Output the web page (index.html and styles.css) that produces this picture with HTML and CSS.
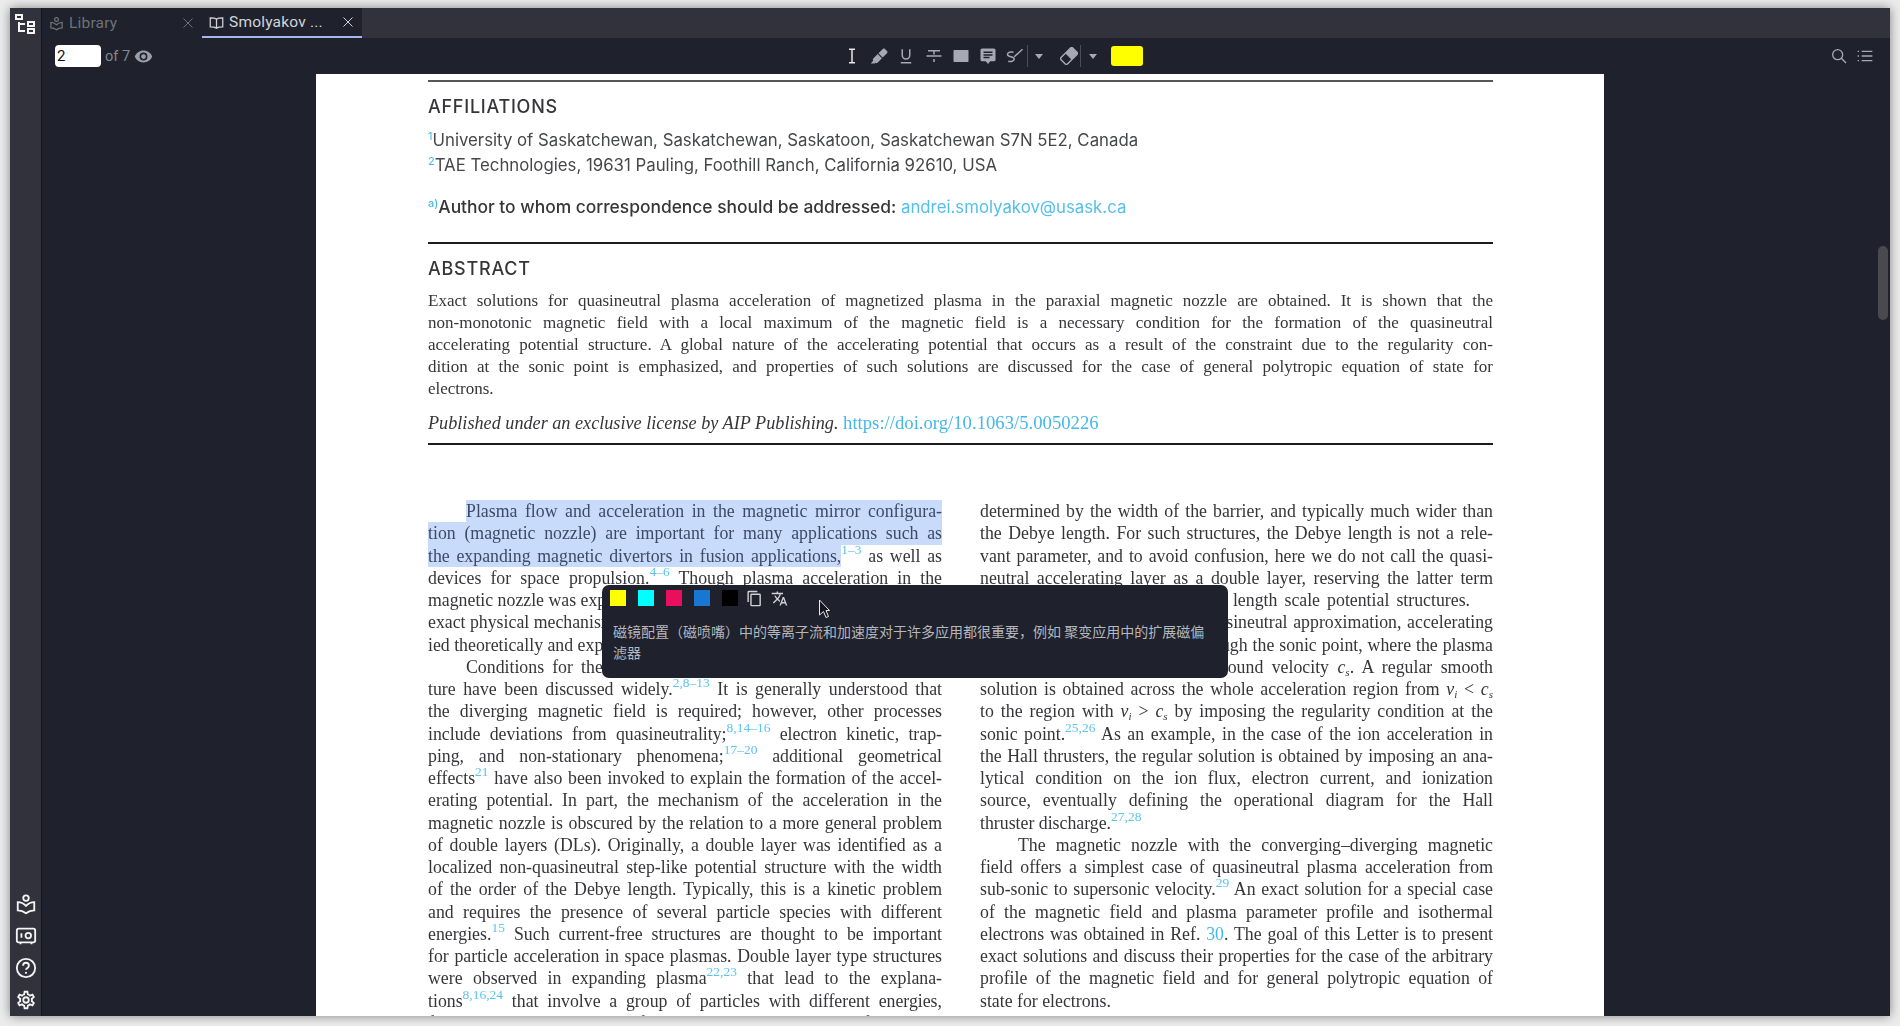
FILE: index.html
```html
<!DOCTYPE html>
<html lang="en">
  <head>
    <meta charset="UTF-8" />
    <meta name="viewport" content="width=device-width, initial-scale=1.0" />
    <title>Smolyakov - PDF reader</title>
    <link rel="stylesheet" href="styles.css">
  </head>
  <body>
    <div class="window">
      <aside class="sidebar">
        <svg class="side-icon tree" viewBox="0 0 24 24"><path class="fill" d="M12 13H7v5h5v2H5V10h2v1h5v2M8 4v2H4V4h4m2-2H2v6h8V2m10 9v2h-4v-2h4m2-2h-8v6h8V9m-2 9v2h-4v-2h4m2-2h-8v6h8v-6Z"/></svg>
        <div class="side-bottom">
          <svg class="side-icon" viewBox="0 0 24 24"><circle class="line" cx="12" cy="5.5" r="3"/><path class="line" d="M3 10c3 0 6.500 1.500 9 4 2.500-2.500 6-4 9-4v9c-3 0-6.500 1-9 3-2.500-2-6-3-9-3Z"/></svg>
          <svg class="side-icon" viewBox="0 0 24 24"><rect class="line" x="2" y="4" width="20" height="15" rx="2"/><circle class="line" cx="14.500" cy="11.500" r="3"/><path class="line" d="M7 9v5M6 19v2M18 19v2"/></svg>
          <svg class="side-icon" viewBox="0 0 24 24"><circle class="line" cx="12" cy="12" r="10"/><path class="line" d="M8.800 9.500a3.200 3.200 0 0 1 6.400 0c0 2.300-3.200 2.500-3.200 4.500"/><circle class="fill" cx="12" cy="17.300" r="1.200"/></svg>
          <svg class="side-icon" viewBox="0 0 24 24"><path class="fill" d="M12,8A4,4 0 0,1 16,12A4,4 0 0,1 12,16A4,4 0 0,1 8,12A4,4 0 0,1 12,8M12,10A2,2 0 0,0 10,12A2,2 0 0,0 12,14A2,2 0 0,0 14,12A2,2 0 0,0 12,10M10,22C9.750,22 9.540,21.820 9.500,21.580L9.130,18.930C8.500,18.680 7.960,18.340 7.440,17.940L4.950,18.950C4.730,19.030 4.460,18.950 4.340,18.730L2.340,15.270C2.210,15.050 2.270,14.780 2.460,14.630L4.570,12.970L4.500,12L4.570,11L2.460,9.370C2.270,9.220 2.210,8.950 2.340,8.730L4.340,5.270C4.460,5.050 4.730,4.960 4.950,5.050L7.440,6.050C7.960,5.660 8.500,5.320 9.130,5.070L9.500,2.420C9.540,2.180 9.750,2 10,2H14C14.250,2 14.460,2.180 14.500,2.420L14.870,5.070C15.500,5.320 16.040,5.660 16.560,6.050L19.050,5.050C19.270,4.960 19.540,5.050 19.660,5.270L21.660,8.730C21.790,8.950 21.730,9.220 21.540,9.370L19.430,11L19.500,12L19.430,13L21.540,14.630C21.730,14.780 21.790,15.050 21.660,15.270L19.660,18.730C19.540,18.950 19.270,19.040 19.050,18.950L16.560,17.950C16.040,18.340 15.500,18.680 14.870,18.930L14.500,21.580C14.460,21.820 14.250,22 14,22H10M11.250,4L10.880,6.610C9.680,6.860 8.620,7.500 7.850,8.390L5.440,7.350L4.690,8.650L6.800,10.200C6.400,11.370 6.400,12.640 6.800,13.800L4.680,15.360L5.430,16.660L7.860,15.620C8.630,16.500 9.680,17.140 10.870,17.380L11.240,20H12.760L13.130,17.390C14.320,17.140 15.370,16.500 16.140,15.620L18.570,16.660L19.320,15.360L17.200,13.810C17.600,12.640 17.600,11.370 17.200,10.200L19.310,8.650L18.560,7.350L16.150,8.390C15.380,7.500 14.320,6.860 13.120,6.620L12.750,4H11.250Z"/></svg>
        </div>
      </aside>

      <main class="main">
        <div class="tabbar">
          <div class="tab">
            <svg class="tab-icon" viewBox="0 0 24 24"><circle class="line" cx="12" cy="5.500" r="3"/><path class="line" d="M3 10c3 0 6.500 1.500 9 4 2.500-2.500 6-4 9-4v9c-3 0-6.500 1-9 3-2.500-2-6-3-9-3Z"/></svg>
            <span class="tab-title">Library</span>
            <svg class="tab-close" viewBox="0 0 24 24"><path class="line" d="M3 3l18 18M21 3L3 21"/></svg>
          </div>
          <div class="tab active">
            <svg class="tab-icon" viewBox="0 0 24 24"><path class="line" d="M12 6.500C10 5 7 4.500 2 4.500V19c5 0 8 .5 10 2 2-1.500 5-2 10-2V4.500c-5 0-8 .5-10 2Zm0 0V21"/></svg>
            <span class="tab-title">Smolyakov ...</span>
            <svg class="tab-close" viewBox="0 0 24 24"><path class="line" d="M3 3l18 18M21 3L3 21"/></svg>
          </div>
        </div>

        <div class="toolbar">
          <div class="pager">
            <input class="page-input" type="text" value="2" />
            <span class="page-count">of 7</span>
            <svg class="eye" viewBox="0 0 24 24"><path class="fill" d="M12,9A3,3 0 0,0 9,12A3,3 0 0,0 12,15A3,3 0 0,0 15,12A3,3 0 0,0 12,9M12,17A5,5 0 0,1 7,12A5,5 0 0,1 12,7A5,5 0 0,1 17,12A5,5 0 0,1 12,17M12,4.500C7,4.500 2.730,7.610 1,12C2.730,16.390 7,19.500 12,19.500C17,19.500 21.270,16.390 23,12C21.270,7.610 17,4.500 12,4.500Z"/></svg>
          </div>
          <div class="tools">
            <div class="tool selected"><svg viewBox="0 0 24 24"><path class="line thick" d="M8 3h8M12 3v18M8 21h8"/></svg></div>
            <div class="tool"><svg viewBox="0 0 24 24"><path class="fill" d="M18.500 2C18 2 17.500 2.200 17.100 2.600L11.300 8.400L16.900 14L22.700 8.200C23.500 7.400 23.500 6.200 22.700 5.400L19.900 2.600C19.500 2.200 19 2 18.500 2ZM10.300 9.400L4.300 15.300C3.600 16.100 3.600 17.300 4.400 18.100L1 22H6.300L7.200 21C8 21.700 9.200 21.700 10 20.900L15.900 15Z"/></svg></div>
            <div class="tool"><svg viewBox="0 0 24 24"><path class="line" d="M7 3v8a5 5 0 0 0 10 0V3M5 21h14"/></svg></div>
            <div class="tool"><svg viewBox="0 0 24 24"><path class="line" d="M4 5h16M12 5v5M2 12h20M12 16v4"/></svg></div>
            <div class="tool"><svg viewBox="0 0 24 24"><rect class="fill" x="2" y="4" width="20" height="16" rx="1"/></svg></div>
            <div class="tool"><svg viewBox="0 0 24 24"><path class="fill" fill-rule="evenodd" d="M4 2h16a2 2 0 0 1 2 2v13a2 2 0 0 1-2 2h-5l-3 3.500L9 19H4a2 2 0 0 1-2-2V4a2 2 0 0 1 2-2ZM6 6v2h12V6ZM6 9.500v2h12v-2ZM6 13v2h8v-2Z"/></svg></div>
            <div class="tool"><svg viewBox="0 0 24 24"><path class="line" d="M11 13l11-10M10 7C6 6 2 7 2 10c0 4 9 2 9 6 0 3-5 4-8 3"/></svg></div>
            <div class="tool-split"><span class="caret"></span></div>
            <div class="tool eraser"><svg viewBox="0 0 24 24"><g transform="rotate(45 12 12)"><rect class="line" x="6" y="1" width="12" height="22" rx="2"/><path class="fill" d="M6 3a2 2 0 0 1 2-2h8a2 2 0 0 1 2 2v10H6Z"/></g></svg></div>
            <div class="tool-split second"><span class="caret"></span></div>
            <div class="color-btn"></div>
          </div>
          <div class="toolbar-right">
            <svg class="right-icon" viewBox="0 0 24 24"><circle class="line" cx="10" cy="10" r="7.500"/><path class="line" d="M15.500 15.500l7 7"/></svg>
            <svg class="right-icon list" viewBox="0 0 24 24"><path class="line" d="M7 5h16M7 12h16M7 19h16M1 5h2M1 12h2M1 19h2"/></svg>
          </div>
        </div>

        <div class="viewer">
          <article class="page">
            <div class="rule thin"></div>
            <h2 class="head first">AFFILIATIONS</h2>
            <div class="aff first"><sup class="mark">1</sup>University of Saskatchewan, Saskatchewan, Saskatoon, Saskatchewan S7N 5E2, Canada</div>
            <div class="aff"><sup class="mark">2</sup>TAE Technologies, 19631 Pauling, Foothill Ranch, California 92610, USA</div>
            <div class="author"><sup class="mark">a)</sup>Author to whom correspondence should be addressed: <a class="mail">andrei.smolyakov@usask.ca</a></div>
            <div class="rule thick author-rule"></div>
            <h2 class="head">ABSTRACT</h2>
            <div class="abstract">
              <div class="ln">Exact solutions for quasineutral plasma acceleration of magnetized plasma in the paraxial magnetic nozzle are obtained. It is shown that the</div>
              <div class="ln">non-monotonic magnetic field with a local maximum of the magnetic field is a necessary condition for the formation of the quasineutral</div>
              <div class="ln">accelerating potential structure. A global nature of the accelerating potential that occurs as a result of the constraint due to the regularity con-</div>
              <div class="ln">dition at the sonic point is emphasized, and properties of such solutions are discussed for the case of general polytropic equation of state for</div>
              <div class="ln last">electrons.</div>
            </div>
            <div class="published"><i>Published under an exclusive license by AIP Publishing.</i> <a class="link doi">https://doi.org/10.1063/5.0050226</a></div>
            <div class="rule thick pub-rule"></div>

            <div class="columns">
              <div class="col">
                <div class="ln indent sel">Plasma flow and acceleration in the magnetic mirror configura-</div>
                <div class="ln sel">tion (magnetic nozzle) are important for many applications such as</div>
                <div class="ln"><span class="sel-part">the expanding magnetic divertors in fusion applications,</span><sup class="ref">1–3</sup> as well as</div>
                <div class="ln">devices for space propulsion.<sup class="ref">4–6</sup> Though plasma acceleration in the</div>
                <div class="ln last">magnetic nozzle was explored in many experiments and the under-</div>
                <div class="ln last">exact physical mechanisms of plasma acceleration have been stud-</div>
                <div class="ln last">ied theoretically and experimentally in several recent works.</div>
                <div class="ln indent">Conditions for the formation of an accelerating potential struc-</div>
                <div class="ln">ture have been discussed widely.<sup class="ref">2,8–13</sup> It is generally understood that</div>
                <div class="ln">the diverging magnetic field is required; however, other processes</div>
                <div class="ln">include deviations from quasineutrality;<sup class="ref">8,14–16</sup> electron kinetic, trap-</div>
                <div class="ln">ping, and non-stationary phenomena;<sup class="ref">17–20</sup> additional geometrical</div>
                <div class="ln">effects<sup class="ref">21</sup> have also been invoked to explain the formation of the accel-</div>
                <div class="ln">erating potential. In part, the mechanism of the acceleration in the</div>
                <div class="ln">magnetic nozzle is obscured by the relation to a more general problem</div>
                <div class="ln">of double layers (DLs). Originally, a double layer was identified as a</div>
                <div class="ln">localized non-quasineutral step-like potential structure with the width</div>
                <div class="ln">of the order of the Debye length. Typically, this is a kinetic problem</div>
                <div class="ln">and requires the presence of several particle species with different</div>
                <div class="ln">energies.<sup class="ref">15</sup> Such current-free structures are thought to be important</div>
                <div class="ln">for particle acceleration in space plasmas. Double layer type structures</div>
                <div class="ln">were observed in expanding plasma<sup class="ref">22,23</sup> that lead to the explana-</div>
                <div class="ln">tions<sup class="ref">8,16,24</sup> that involve a group of particles with different energies,</div>
                <div class="ln">for example, trapped and reflected electrons and beams of particles.</div>
              </div>
              <div class="col">
                <div class="ln">determined by the width of the barrier, and typically much wider than</div>
                <div class="ln">the Debye length. For such structures, the Debye length is not a rele-</div>
                <div class="ln">vant parameter, and to avoid confusion, here we do not call the quasi-</div>
                <div class="ln">neutral accelerating layer as a double layer, reserving the latter term</div>
                <div class="ln short">for the phenomena on the Debye length scale potential structures.</div>
                <div class="ln indent">In this Letter, within the quasineutral approximation, accelerating</div>
                <div class="ln">potential is shown to pass on through the sonic point, where the plasma</div>
                <div class="ln">flow speed is equal to the ion sound velocity <i>c<span class="sub">s</span></i>. A regular smooth</div>
                <div class="ln">solution is obtained across the whole acceleration region from <i>v<span class="sub">i</span></i> &lt; <i>c<span class="sub">s</span></i></div>
                <div class="ln">to the region with <i>v<span class="sub">i</span></i> &gt; <i>c<span class="sub">s</span></i> by imposing the regularity condition at the</div>
                <div class="ln">sonic point.<sup class="ref">25,26</sup> As an example, in the case of the ion acceleration in</div>
                <div class="ln">the Hall thrusters, the regular solution is obtained by imposing an ana-</div>
                <div class="ln">lytical condition on the ion flux, electron current, and ionization</div>
                <div class="ln">source, eventually defining the operational diagram for the Hall</div>
                <div class="ln last">thruster discharge.<sup class="ref">27,28</sup></div>
                <div class="ln indent">The magnetic nozzle with the converging–diverging magnetic</div>
                <div class="ln">field offers a simplest case of quasineutral plasma acceleration from</div>
                <div class="ln">sub-sonic to supersonic velocity.<sup class="ref">29</sup> An exact solution for a special case</div>
                <div class="ln">of the magnetic field and plasma parameter profile and isothermal</div>
                <div class="ln">electrons was obtained in Ref. <a class="link">30</a>. The goal of this Letter is to present</div>
                <div class="ln">exact solutions and discuss their properties for the case of the arbitrary</div>
                <div class="ln">profile of the magnetic field and for general polytropic equation of</div>
                <div class="ln last">state for electrons.</div>
                <div class="ln indent">The quasineutral plasma acceleration is studied in this section</div>
              </div>
            </div>
          </article>

          <div class="scrollbar"></div>

          <div class="popover">
            <div class="pop-actions">
              <span class="swatch yellow"></span>
              <span class="swatch cyan"></span>
              <span class="swatch pink"></span>
              <span class="swatch blue"></span>
              <span class="swatch black"></span>
              <svg class="pop-icon" viewBox="0 0 24 24"><path class="fill" d="M19,21H8V7H19M19,5H8A2,2 0 0,0 6,7V21A2,2 0 0,0 8,23H19A2,2 0 0,0 21,21V7A2,2 0 0,0 19,5M16,1H4A2,2 0 0,0 2,3V17H4V3H16V1Z"/></svg>
              <svg class="pop-icon translate" viewBox="0 0 24 24"><path class="fill" d="M12.870,15.070L10.330,12.560L10.360,12.530C12.100,10.590 13.340,8.360 14.070,6H17V4H10V2H8V4H1V6H12.170C11.500,7.920 10.440,9.750 9,11.350C8.070,10.320 7.300,9.190 6.690,8H4.690C5.420,9.630 6.420,11.170 7.670,12.560L2.580,17.580L4,19L9,14L12.110,17.110L12.870,15.070M18.500,10H16.500L12,22H14L15.120,19H19.870L21,22H23L18.500,10M15.880,17L17.500,12.670L19.120,17H15.880Z"/></svg>
            </div>
            <p class="pop-text">磁镜配置（磁喷嘴）中的等离子流和加速度对于许多应用都很重要，例如 聚变应用中的扩展磁偏滤器</p>
            <svg class="cursor" viewBox="0 0 12 20"><path d="M1 1v15l4-3.500 2.500 6 2.500-1-2.500-6H11Z"/></svg>
          </div>
        </div>
      </main>
    </div>
  </body>
</html>
```

FILE: styles.css
```css
* {
  box-sizing: border-box;
}
body {
  margin: 0;
  height: 1026px;
  overflow: hidden;
  background-color: #ececec;
  padding: 8px 10px 10px;
}
svg .line,
.line {
  fill: none;
  stroke: currentColor;
  stroke-width: 2;
}
.thick {
  stroke-width: 3;
}
.fill {
  fill: currentColor;
}

.window {
  display: flex;
  height: 1008px;
  background-color: #1f212c;
  box-shadow: 0 0 10px rgba(0, 0, 0, 0.45);
}

.sidebar {
  width: 32px;
  flex: none;
  display: flex;
  flex-direction: column;
  justify-content: space-between;
  align-items: center;
  padding: 4px 0 5px;
  background-color: #32323c;
  border-right: 1px solid #14141b;
  color: #f4f4f4;
}
.side-icon {
  width: 22px;
  height: 22px;
  display: block;
}
.side-icon.tree {
  width: 24px;
  height: 24px;
  margin-left: -1px;
}
.side-bottom {
  display: flex;
  flex-direction: column;
  gap: 10px;
}

.main {
  flex: 1;
  min-width: 0;
  display: flex;
  flex-direction: column;
}
.tabbar {
  height: 30px;
  flex: none;
  display: flex;
  background-color: #32323c;
}
.tab {
  width: 160px;
  display: flex;
  align-items: center;
  padding: 0 8px 0 7px;
  background-color: #1f212c;
  color: #6f7279;
  font-family: Roboto, sans-serif;
  font-size: 15.5px;
}
.tab.active {
  color: #d3d5da;
  border-bottom: 2px solid #a6b5ee;
}
.tab-icon {
  width: 15px;
  height: 15px;
  margin-right: 5px;
  flex: none;
}
.tab-title {
  flex: 1;
  white-space: nowrap;
  letter-spacing: 0.2px;
}
.tab-close {
  width: 12px;
  height: 12px;
  flex: none;
}

.toolbar {
  height: 36px;
  flex: none;
  display: flex;
  align-items: center;
  padding: 0 16px 0 13px;
  background-color: #1f212c;
  color: #a4a9b3;
}
.pager {
  display: flex;
  align-items: center;
  font-family: Roboto, sans-serif;
  font-size: 14.5px;
  color: #858993;
  width: 783px;
}
.page-input {
  width: 46px;
  height: 22px;
  padding: 0 2px;
  border: none;
  border-radius: 4px;
  background-color: #fff;
  font-family: Roboto, sans-serif;
  font-size: 15px;
  color: #111;
}
.page-count {
  margin-left: 4px;
}
.eye {
  width: 19px;
  height: 19px;
  margin-left: 4px;
  color: #9aa0aa;
}
.tools {
  display: flex;
  align-items: center;
}
.tool {
  width: 27.3px;
  height: 24px;
  display: flex;
  align-items: center;
  justify-content: center;
}
.tool svg {
  width: 18px;
  height: 18px;
}
.tool.selected {
  color: #e8e8ea;
}
.tool.eraser {
  width: 30px;
  margin-left: 3.5px;
}
.tool-split {
  width: 23px;
  height: 22px;
  margin-left: -2px;
  padding-left: 7px;
  display: flex;
  align-items: center;
  border-left: 1px solid #4a4c56;
}
.tool-split.second {
  margin-left: -3.5px;
  padding-left: 8px;
}
.caret {
  width: 0;
  height: 0;
  border-left: 4.5px solid transparent;
  border-right: 4.5px solid transparent;
  border-top: 5px solid #a4a9b3;
}
.color-btn {
  width: 32px;
  height: 20px;
  margin-left: 8px;
  border-radius: 3px;
  background-color: #ffff00;
}
.toolbar-right {
  margin-left: auto;
  display: flex;
  align-items: center;
  gap: 9px;
}
.right-icon {
  width: 16px;
  height: 16px;
}
.right-icon.list {
  width: 18px;
}

.viewer {
  position: relative;
  flex: 1;
  min-height: 0;
  overflow: hidden;
  background-color: #1f212c;
}
.page {
  width: 1288px;
  height: 100%;
  margin-left: 274px;
  padding: 6px 111px 0 112px;
  overflow: hidden;
  background-color: #fff;
  color: #36363a;
  filter: blur(0.3px);
}
.rule {
  background-color: #2c2c2e;
}
.rule.thin {
  height: 1.5px;
  background-color: #55565a;
}
.rule.thick {
  height: 2.5px;
  background-color: #1c1c1e;
}
.author-rule {
  margin-top: 22.5px;
}
.pub-rule {
  margin-top: 8.5px;
}

.head {
  margin: 12.5px 0 0;
  font-family: Inter, sans-serif;
  font-size: 18px;
  font-weight: 500;
  line-height: 24px;
  letter-spacing: 0.75px;
}
.head.first {
  margin-top: 13.5px;
}
.aff {
  font-family: Inter, sans-serif;
  font-size: 16.8px;
  line-height: 25px;
  color: #46474b;
  white-space: nowrap;
}
.aff.first {
  margin-top: 9px;
}
.author {
  margin-top: 17px;
  font-family: Inter, sans-serif;
  font-size: 17.4px;
  font-weight: 500;
  line-height: 24px;
  white-space: nowrap;
}
.mark {
  font-size: 11px;
  line-height: 0;
  vertical-align: 6px;
  color: #46b8e8;
}
.mail {
  color: #55bfea;
  font-size: 16.8px;
  font-weight: 400;
}
.link {
  color: #45b8ea;
}

.abstract {
  margin-top: 9.5px;
  font-family: "Liberation Serif", serif;
  font-size: 17px;
  line-height: 21.9px;
}
.ln {
  white-space: nowrap;
  text-align: justify;
  text-align-last: justify;
}
.ln.last {
  text-align-last: left;
}
.ln.short {
  padding-right: 23px;
}
.ln.indent {
  margin-left: 38px;
}
.published {
  margin-top: 12.5px;
  font-family: "Liberation Serif", serif;
  font-size: 18.2px;
  line-height: 22px;
  white-space: nowrap;
}
.doi {
  font-size: 18.7px;
}

.columns {
  display: grid;
  grid-template-columns: 514px 513px;
  column-gap: 38px;
  margin-top: 55px;
  font-family: "Liberation Serif", serif;
  font-size: 17.8px;
  line-height: 22.25px;
}
.sel {
  background-color: #c9dbfb;
  color: #3c4a66;
}
.sel-part {
  padding: 1px 0;
  background-color: #c9dbfb;
  color: #3c4a66;
}
.ref {
  font-size: 13.5px;
  line-height: 0;
  vertical-align: 8.5px;
  color: #5cc3ef;
}
.sub {
  font-size: 11px;
  line-height: 0;
  vertical-align: -3px;
}

.scrollbar {
  position: absolute;
  top: 172px;
  right: 2px;
  width: 10px;
  height: 74px;
  border-radius: 5px;
  background-color: #4a4a4e;
}

.popover {
  position: absolute;
  left: 560px;
  top: 511px;
  width: 626px;
  height: 93px;
  padding: 4px 11px 0 8px;
  border-radius: 7px;
  background-color: #1f212c;
  color: #b4b7be;
}
.pop-actions {
  display: flex;
  align-items: center;
  height: 18px;
}
.swatch {
  width: 16px;
  height: 16px;
  margin-right: 12px;
}
.swatch.yellow {
  background-color: #ffff00;
}
.swatch.cyan {
  background-color: #00ffff;
}
.swatch.pink {
  background-color: #e90f5d;
}
.swatch.blue {
  background-color: #1976d2;
}
.swatch.black {
  background-color: #000;
  margin-right: 8px;
}
.pop-icon {
  width: 17px;
  height: 17px;
  color: #cfd1d6;
}
.pop-icon.translate {
  margin-left: 8px;
}
.pop-text {
  margin: 14px 0 0 3px;
  font-family: "Noto Sans CJK SC", sans-serif;
  font-size: 14px;
  line-height: 21px;
}
.cursor {
  position: absolute;
  left: 216px;
  top: 14px;
  width: 13px;
  height: 20px;
  fill: #15161c;
  stroke: #e8e8e8;
  stroke-width: 1;
}
```
